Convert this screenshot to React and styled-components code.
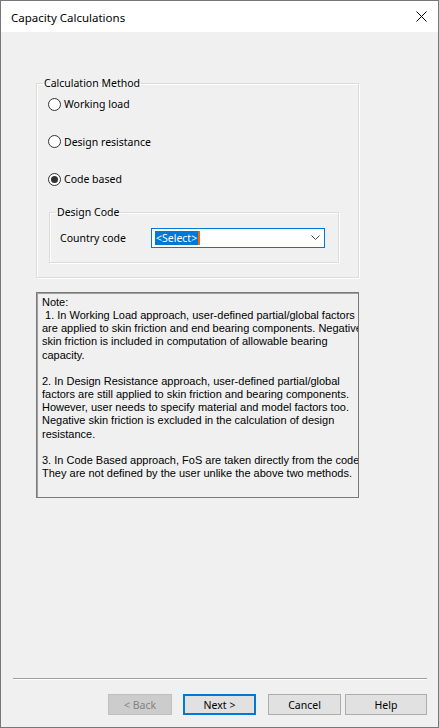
import React from 'react';
import styled, { createGlobalStyle } from 'styled-components';

const GlobalStyle = createGlobalStyle`
  html, body {
    margin: 0;
    padding: 0;
    background: #f0f0f0;
  }
  * {
    box-sizing: border-box;
  }
`;

const uiFont = `"Segoe UI", "Noto Sans", "Open Sans", sans-serif`;
const noteFont = `Tahoma, "Liberation Sans", Arial, sans-serif`;

const noteLines = [
  'Note:',
  ' 1. In Working Load approach, user-defined partial/global factors',
  'are applied to skin friction and end bearing components. Negative',
  'skin friction is included in computation of allowable bearing',
  'capacity.',
  '',
  '2. In Design Resistance approach, user-defined partial/global',
  'factors are still applied to skin friction and bearing components.',
  'However, user needs to specify material and model factors too.',
  'Negative skin friction is excluded in the calculation of design',
  'resistance.',
  '',
  '3. In Code Based approach, FoS are taken directly from the code.',
  'They are not defined by the user unlike the above two methods.'
];

const methods = [
  { id: 'working', label: 'Working load' },
  { id: 'design', label: 'Design resistance' },
  { id: 'code', label: 'Code based' }
];

const Window = styled.div`
  width: 439px;
  height: 728px;
  border: 1px solid #777777;
  background: #f0f0f0;
  display: flex;
  flex-direction: column;
  font-family: ${uiFont};
  font-size: 10.5px;
  color: #000;
`;

const TitleBar = styled.div`
  height: 31px;
  background: #ffffff;
  display: flex;
  align-items: center;
  justify-content: space-between;
  padding: 0 10px 0 10px;
  flex-shrink: 0;
`;

const Title = styled.div`
  font-size: 11.5px;
  padding-top: 1px;
`;

const CloseButton = styled.div`
  width: 12px;
  height: 12px;
  display: flex;
  align-items: center;
  justify-content: center;
  margin-right: 1px;
`;

const Body = styled.div`
  flex: 1;
  display: flex;
  flex-direction: column;
  padding: 43px 0 0 35px;
`;

const GroupBox = styled.fieldset`
  margin: ${p => p.$margin || '0'};
  padding: ${p => p.$padding || '0'};
  width: ${p => p.$width}px;
  border: 1px solid #dcdcdc;
  box-shadow: 1px 1px 0 #ffffff, inset 1px 1px 0 #ffffff;
  min-width: 0;
`;

const Legend = styled.legend`
  padding: 0 1px;
  margin-left: ${p => p.$offset}px;
  line-height: 16px;
`;

const RadioRow = styled.label`
  display: flex;
  align-items: center;
  height: 20px;
  margin-bottom: ${p => (p.$last ? '15px' : '17.5px')};
  gap: 3px;
`;

const RadioCircle = styled.span`
  width: 13px;
  height: 13px;
  border-radius: 50%;
  border: 1px solid #333333;
  background: #ffffff;
  display: flex;
  align-items: center;
  justify-content: center;
  &::after {
    content: '';
    width: 7px;
    height: 7px;
    border-radius: 50%;
    background: ${p => (p.$checked ? '#333333' : 'transparent')};
  }
`;

const FieldRow = styled.div`
  display: flex;
  align-items: center;
  padding-top: 8px;
`;

const FieldLabel = styled.span`
  width: 91px;
`;

const Combo = styled.div`
  width: 174px;
  height: 20px;
  border: 1px solid #0078d7;
  background: #ffffff;
  display: flex;
  align-items: center;
  padding: 0 4px 0 3px;
`;

const Selected = styled.span`
  background: #0078d7;
  color: #ffffff;
  line-height: 14px;
  padding: 0 1px;
  border-right: 2px solid #f7630c;
`;

const Chevron = styled.span`
  margin-left: auto;
  display: flex;
  align-items: center;
`;

const NoteBox = styled.div`
  margin-top: 14px;
  width: 323px;
  height: 206px;
  border: 1px solid #7a7a7a;
  box-shadow: inset 1px 1px 0 #a0a0a0;
  padding: 3px 0 0 5px;
  overflow: hidden;
  font-family: ${noteFont};
  font-size: 11px;
  line-height: 13.15px;
  white-space: pre;
`;

const Footer = styled.div`
  margin-top: auto;
  padding: 0 11px 12px 12px;
`;

const Separator = styled.div`
  height: 2px;
  border-top: 1px solid #a0a0a0;
  border-bottom: 1px solid #ffffff;
  margin-bottom: 14px;
`;

const ButtonRow = styled.div`
  display: flex;
  justify-content: flex-end;
`;

const Button = styled.button`
  width: ${p => p.$width}px;
  height: 21px;
  margin-left: ${p => p.$gap}px;
  font-family: ${uiFont};
  font-size: 10.5px;
  padding: 0;
  background: ${p => (p.disabled ? '#cccccc' : '#e1e1e1')};
  color: ${p => (p.disabled ? '#838383' : '#000000')};
  border: ${p =>
    p.$default ? '2px solid #0078d7' : p.disabled ? '1px solid #bfbfbf' : '1px solid #adadad'};
`;

export default function App() {
  return (
    <>
      <GlobalStyle />
      <Window>
        <TitleBar>
          <Title>Capacity Calculations</Title>
          <CloseButton>
            <svg width="11" height="11" viewBox="0 0 11 11">
              <path d="M0.5 0.5 L10.5 10.5 M10.5 0.5 L0.5 10.5" stroke="#000" strokeWidth="1" />
            </svg>
          </CloseButton>
        </TitleBar>
        <Body>
          <GroupBox $width={323} $padding="3px 0 14px 11px">
            <Legend $offset={-5}>Calculation Method</Legend>
            {methods.map((m, i) => (
              <RadioRow key={m.id} $last={i === methods.length - 1}>
                <RadioCircle $checked={m.id === 'code'} />
                {m.label}
              </RadioRow>
            ))}
            <GroupBox $width={290} $margin="0 0 0 1px" $padding="0 0 14px 10px">
              <Legend $offset={-4}>Design Code</Legend>
              <FieldRow>
                <FieldLabel>Country code</FieldLabel>
                <Combo>
                  <Selected>&lt;Select&gt;</Selected>
                  <Chevron>
                    <svg width="9" height="6" viewBox="0 0 9 6">
                      <path d="M0.5 0.5 L4.5 4.5 L8.5 0.5" stroke="#444" strokeWidth="1" fill="none" />
                    </svg>
                  </Chevron>
                </Combo>
              </FieldRow>
            </GroupBox>
          </GroupBox>
          <NoteBox>{noteLines.join('\n')}</NoteBox>
        </Body>
        <Footer>
          <Separator />
          <ButtonRow>
            <Button $width={64} $gap={0} disabled>&lt; Back</Button>
            <Button $width={73} $gap={11} $default>Next &gt;</Button>
            <Button $width={73} $gap={12}>Cancel</Button>
            <Button $width={82} $gap={4}>Help</Button>
          </ButtonRow>
        </Footer>
      </Window>
    </>
  );
}
